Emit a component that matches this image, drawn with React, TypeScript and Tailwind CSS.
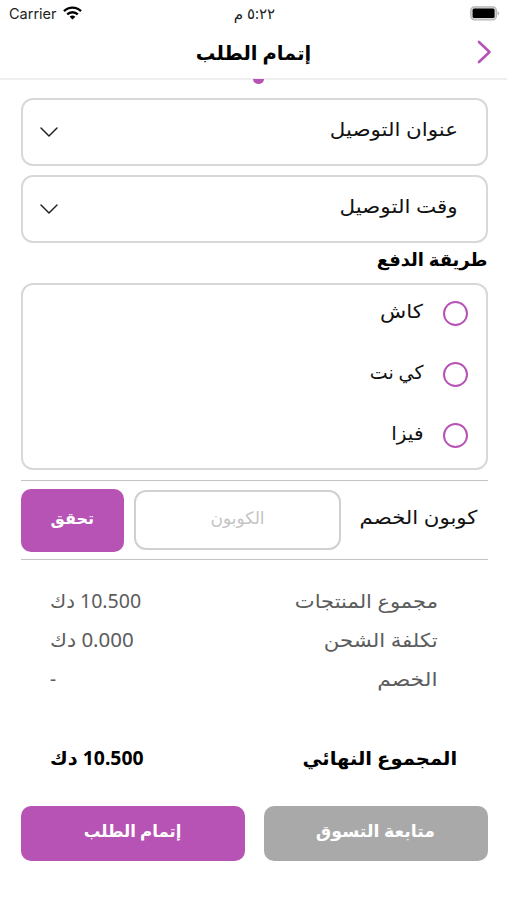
const paymentMethods = [
  { label: "كاش", stretch: "scale-x-[1.13]" },
  { label: "كي نت", stretch: "scale-x-[1.0]" },
  { label: "فيزا", stretch: "scale-x-[1.06]" },
];

const summary = [
  { label: "مجموع المنتجات", stretch: "scale-x-[1.11]", amount: "10.500 دك", amountStretch: "scale-x-[1.03]" },
  { label: "تكلفة الشحن", stretch: "scale-x-[1.12]", amount: "0.000 دك", amountStretch: "scale-x-[1.08]" },
  { label: "الخصم", stretch: "scale-x-[1.15]", amount: "-", amountStretch: "scale-x-100" },
];

function StatusBar() {
  return (
    <div dir="ltr" className="grid h-7 grid-cols-3 items-center pl-[9px] pr-[7px]">
      <div className="flex items-center gap-[6px]">
        <span className="font-['Inter',sans-serif] text-[14.5px] leading-none text-[#222]">Carrier</span>
        <svg className="-mt-[2px]" width="19" height="14" viewBox="0 0 19 14" fill="none" stroke="#000" strokeWidth="2.4">
          <path d="M1 5.2C5.8.4 13.2.4 18 5.2" />
          <path d="M4.2 8.4c3-2.9 7.6-2.9 10.6 0" />
          <path d="M9.5 13.6 6.6 10.7c1.7-1.5 4.1-1.5 5.8 0z" fill="#000" stroke="none" />
        </svg>
      </div>
      <span dir="rtl" className="-mt-[2px] text-center text-[15px] leading-none text-[#222]">٥:٢٢ م</span>
      <svg className="-mt-[2px] justify-self-end" width="30" height="15" viewBox="0 0 30 15">
        <rect x="0.8" y="0.8" width="25.6" height="13" rx="3.6" fill="#d8d8d8" stroke="#b5b5b5" strokeWidth="1.2" />
        <rect x="2.6" y="2.6" width="22" height="9.4" rx="1.6" fill="#000" />
        <path d="M27.6 5v4.6c2.2-.8 2.2-3.8 0-4.6z" fill="#b5b5b5" />
      </svg>
    </div>
  );
}

function SelectBox({ label, stretch }: { label: string; stretch: string }) {
  return (
    <button className="flex h-[68px] w-full items-center justify-between rounded-[12px] border-2 border-[#d8d8d8] pl-[16px] pr-[28px] text-[#111]">
      <span className={`origin-right pb-[5px] text-[19px] leading-none ${stretch}`}>{label}</span>
      <svg width="20" height="12" viewBox="0 0 20 12" fill="none" stroke="#222" strokeWidth="1.5" strokeLinecap="round" strokeLinejoin="round">
        <path d="M2 2l8 8 8-8" />
      </svg>
    </button>
  );
}

export default function App() {
  return (
    <div dir="rtl" className="h-[900px] w-full overflow-hidden bg-white font-['Noto_Sans','DejaVu_Sans',sans-serif] text-black">
      <StatusBar />

      <header className="relative flex h-[52px] items-center justify-center border-b-2 border-[#efefef]">
        <h1 className="text-[19.5px] font-bold leading-none">إتمام الطلب</h1>
        <svg className="absolute right-[15px] top-[11px]" width="16" height="26" viewBox="0 0 16 26" fill="none" stroke="#b653b5" strokeWidth="2.6" strokeLinecap="round" strokeLinejoin="round">
          <path d="M3 3 13.5 13 3 23" />
        </svg>
        <span className="absolute left-[253px] top-[51px] h-[5px] w-[11px] rounded-b-full bg-[#b653b5]" />
      </header>

      <main className="pl-[20.5px] pr-[19.5px] pt-[18px]">
        <div className="flex flex-col gap-[9px]">
          <SelectBox label="عنوان التوصيل" stretch="scale-x-[1.125]" />
          <SelectBox label="وقت التوصيل" stretch="scale-x-[1.13]" />
        </div>

        <h2 className="flex h-[40px] items-center pb-[8px] text-[18px] font-bold leading-none">طريقة الدفع</h2>

        <div className="h-[187px] rounded-[12px] border-2 border-[#d8d8d8] pr-[18px]">
          {paymentMethods.map((method) => (
            <label key={method.label} className="-mt-[2px] mb-[2px] flex h-[61px] items-center gap-[19px]">
              <span className="size-[25px] rounded-full border-2 border-[#b653b5]" />
              <span className={`origin-right pb-[5px] text-[19px] leading-none text-[#111] ${method.stretch}`}>
                {method.label}
              </span>
            </label>
          ))}
        </div>

        <div className="mt-[10px] flex h-[80px] items-center border-y border-[#c4c4c4] pr-[10px]">
          <span className="w-[118px] origin-right scale-x-[1.12] whitespace-nowrap pb-[6px] text-[19px] leading-none text-[#111]">
            كوبون الخصم
          </span>
          <input
            placeholder="الكوبون"
            className="mr-[19px] h-[60px] w-[207px] rounded-[12px] border-2 border-[#d0d0d0] pb-[5px] text-center text-[17px] placeholder:text-[#c4c4c4]"
          />
          <button className="mr-[10px] h-[63px] w-[104px] rounded-[10px] bg-[#b853b6] pb-[5px] text-[16px] font-bold leading-none text-white">
            تحقق
          </button>
        </div>

        <div className="mt-[22px] pl-[29.5px] pr-[50px] text-[19px] text-[#5c5c5c]">
          {summary.map((row) => (
            <div key={row.label} className="flex h-[39px] items-center justify-between leading-none">
              <span className={`origin-right ${row.stretch}`}>{row.label}</span>
              <span className={`origin-left ${row.amountStretch}`}>{row.amount}</span>
            </div>
          ))}
        </div>

        <div className="mt-[40px] flex h-[39px] items-center justify-between pl-[29.5px] pr-[30px] text-[19px] font-bold leading-none">
          <span className="origin-right scale-x-[1.03]">المجموع النهائي</span>
          <span className="origin-left scale-x-[1.02]">10.500 دك</span>
        </div>

        <div className="mt-[28px] grid grid-cols-2 gap-[19px]">
          <button className="h-[55px] rounded-[10px] bg-[#a9a9a9] pb-[6px] text-[17px] font-bold leading-none text-white">
            <span className="inline-block scale-x-[1.02]">متابعة التسوق</span>
          </button>
          <button className="h-[55px] rounded-[10px] bg-[#b853b6] pb-[5px] text-[16.5px] font-bold leading-none text-white">
            إتمام الطلب
          </button>
        </div>
      </main>
    </div>
  );
}
